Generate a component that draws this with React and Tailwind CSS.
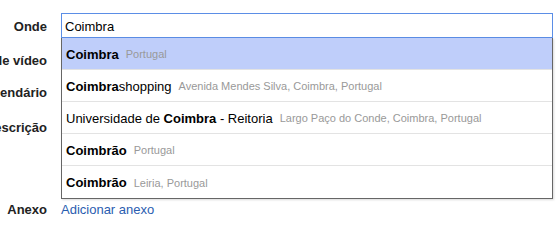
import React from 'react';

const suggestions = [
    { parts: [{ t: 'Coimbra', b: true }], sub: 'Portugal' },
    { parts: [{ t: 'Coimbra', b: true }, { t: 'shopping' }], sub: 'Avenida Mendes Silva, Coimbra, Portugal' },
    { parts: [{ t: 'Universidade de ' }, { t: 'Coimbra', b: true }, { t: ' - Reitoria' }], sub: 'Largo Paço do Conde, Coimbra, Portugal' },
    { parts: [{ t: 'Coimbrão', b: true }], sub: 'Portugal' },
    { parts: [{ t: 'Coimbrão', b: true }], sub: 'Leiria, Portugal' },
];

function Label({ children, className = '' }) {
    return (
        <div className={`w-[47px] shrink-0 flex justify-end whitespace-nowrap font-bold text-[13px] text-[#222] ${className}`}>
            {children}
        </div>
    );
}

function App() {
    return (
        <div className="relative w-[560px] h-[228px] overflow-hidden bg-white pt-[13px] font-['Liberation_Sans',Arial,sans-serif]">
            {/* Onde */}
            <div className="flex items-center gap-[14px] h-[25px]">
                <Label className="pt-[2px]">Onde</Label>
                <div className="w-[492px] h-[25px] border border-[#5b8ee6] flex items-center px-[3px] pt-[2px] text-[13px] text-black">
                    Coimbra
                </div>
            </div>

            <div className="flex items-center gap-[14px] h-[24px] mt-[11px]">
                <Label>Chamada de vídeo</Label>
                <div className="flex-1" />
            </div>

            <div className="flex items-center gap-[14px] h-[24px] mt-[8px]">
                <Label>Calendário</Label>
                <div className="flex-1" />
            </div>

            <div className="flex items-start gap-[14px] h-[78px] mt-[15px]">
                <Label className="leading-[16px]">Descrição</Label>
                <div className="flex-1" />
            </div>

            <div className="flex items-center gap-[14px] h-[16px] mt-[4px]">
                <Label>Anexo</Label>
                <a className="text-[13px] text-[#2a5db0] leading-[16px] cursor-pointer">Adicionar anexo</a>
            </div>

            {/* Autocomplete dropdown */}
            <div className="absolute left-[61px] top-[38px] w-[492px] bg-white border border-t-0 border-[#666] shadow-[1px_1px_2px_rgba(0,0,0,0.15)]">
                {suggestions.map((s, i) => (
                    <div
                        key={i}
                        className={`h-[32px] flex items-center px-[4px] pt-[2px] whitespace-nowrap ${i === 0 ? 'bg-[#bfcefa]' : ''} ${i < suggestions.length - 1 ? 'border-b border-[#e3e3e3]' : ''}`}
                    >
                        <span className="text-[13px] text-black">
                            {s.parts.map((p, j) => (
                                <span key={j} className={p.b ? 'font-bold' : ''}>{p.t}</span>
                            ))}
                        </span>
                        <span className="ml-[7px] text-[11px] text-[#999]">{s.sub}</span>
                    </div>
                ))}
            </div>
        </div>
    );
}

export default App;
